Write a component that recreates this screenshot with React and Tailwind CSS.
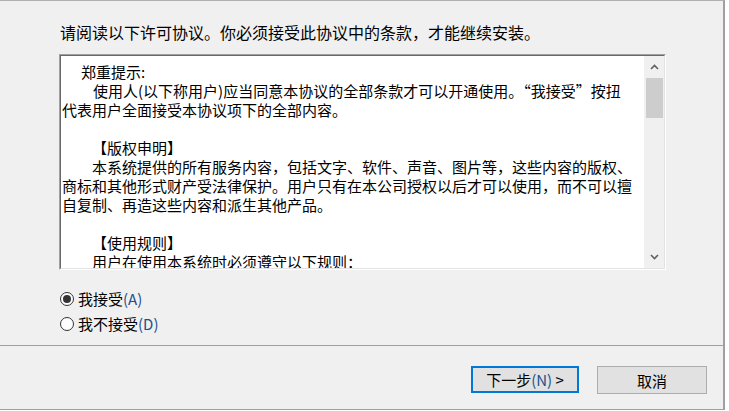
import React from "react";

const lines = [
  { pl: 19, t: "郑重提示:" },
  { pl: 31, t: "使用人(以下称用户)应当同意本协议的全部条款才可以开通使用。“我接受”按扭" },
  { pl: 0, t: "代表用户全面接受本协议项下的全部内容。" },
  { pl: 0, t: "" },
  { pl: 30, t: "【版权申明】" },
  { pl: 30, t: "本系统提供的所有服务内容，包括文字、软件、声音、图片等，这些内容的版权、" },
  { pl: 0, t: "商标和其他形式财产受法律保护。用户只有在本公司授权以后才可以使用，而不可以擅" },
  { pl: 0, t: "自复制、再造这些内容和派生其他产品。" },
  { pl: 0, t: "" },
  { pl: 30, t: "【使用规则】" },
  { pl: 30, t: "用户在使用本系统时必须遵守以下规则：" },
];

function Radio({ checked, label, mn }) {
  return (
    <div className="flex items-center h-[25px]">
      <div className="w-[14px] h-[14px] rounded-full border border-[#333333] bg-white flex items-center justify-center">
        {checked && <div className="w-[8px] h-[8px] rounded-full bg-[#333333]" />}
      </div>
      <span className="ml-[4px] text-[15px] leading-[20px] text-black">
        {label}
        <span className="text-[#1f4f8c]">({mn})</span>
      </span>
    </div>
  );
}

export default function App() {
  const font = { fontFamily: '"Noto Sans CJK SC", "Noto Sans", sans-serif' };
  return (
    <div
      className="w-[729px] h-[411px] bg-white overflow-hidden flex flex-col"
      style={font}
    >
      <div className="flex flex-1 min-h-0">
        <div className="w-[725px] flex flex-col bg-[#f0f0f0] border-t border-[#b0b0b0] border-r-2 border-r-[#a0a0a0] border-b border-b-[#a0a0a0]">
          {/* content */}
          <div className="h-[345px] flex flex-col pl-[60px] border-b border-[#a0a0a0]">
            <div className="mt-[21px] pl-[0px] text-[16px] leading-[20px] text-black whitespace-nowrap">
              请阅读以下许可协议。你必须接受此协议中的条款，才能继续安装。
            </div>
            <div className="mt-[12px] -ml-[1px] w-[607px] h-[216px] border border-t-[#a0a0a0] border-l-[#a0a0a0] border-r-white border-b-white">
              <div className="w-full h-full flex border border-t-[#696969] border-l-[#696969] border-r-[#e3e3e3] border-b-[#e3e3e3] bg-white">
                <div className="flex-1 overflow-hidden pt-[6px] pl-[1px] text-[15px] leading-[19px] text-black">
                  {lines.map((l, i) => (
                    <div key={i} className="whitespace-nowrap h-[19px]" style={{ paddingLeft: l.pl }}>
                      {l.t}
                    </div>
                  ))}
                </div>
                <div className="w-[20px] bg-[#f0f0f0] flex flex-col items-center">
                  <div className="h-[22px] flex items-center justify-center">
                    <svg width="9" height="6" viewBox="0 0 9 6">
                      <path d="M1 5 L4.5 1.5 L8 5" fill="none" stroke="#606060" strokeWidth="1.6" />
                    </svg>
                  </div>
                  <div className="w-[17px] h-[40px] bg-[#cdcdcd]" />
                  <div className="flex-1" />
                  <div className="h-[22px] flex items-center justify-center">
                    <svg width="9" height="6" viewBox="0 0 9 6">
                      <path d="M1 1 L4.5 4.5 L8 1" fill="none" stroke="#606060" strokeWidth="1.6" />
                    </svg>
                  </div>
                </div>
              </div>
            </div>
            <div className="mt-[16px] pl-[0px] flex flex-col">
              <Radio checked label="我接受" mn="A" />
              <Radio label="我不接受" mn="D" />
            </div>
          </div>
          {/* buttons */}
          <div className="flex-1 flex justify-end items-start pt-[20px] pr-[16px] gap-[18px]">
            <button className="w-[108px] h-[27px] border-2 border-[#0078d7] bg-[#e1e1e1] text-[15px] leading-none text-black flex items-center justify-center">
              下一步<span className="text-[#1f4f8c]">(N)</span>&nbsp;&gt;
            </button>
            <button className="w-[110px] h-[28px] border border-[#adadad] bg-[#e1e1e1] text-[15px] leading-none text-black flex items-center justify-center">
              取消
            </button>
          </div>
        </div>
        <div className="flex-1 bg-white" />
      </div>
      <div className="h-[1px] bg-white" />
    </div>
  );
}
